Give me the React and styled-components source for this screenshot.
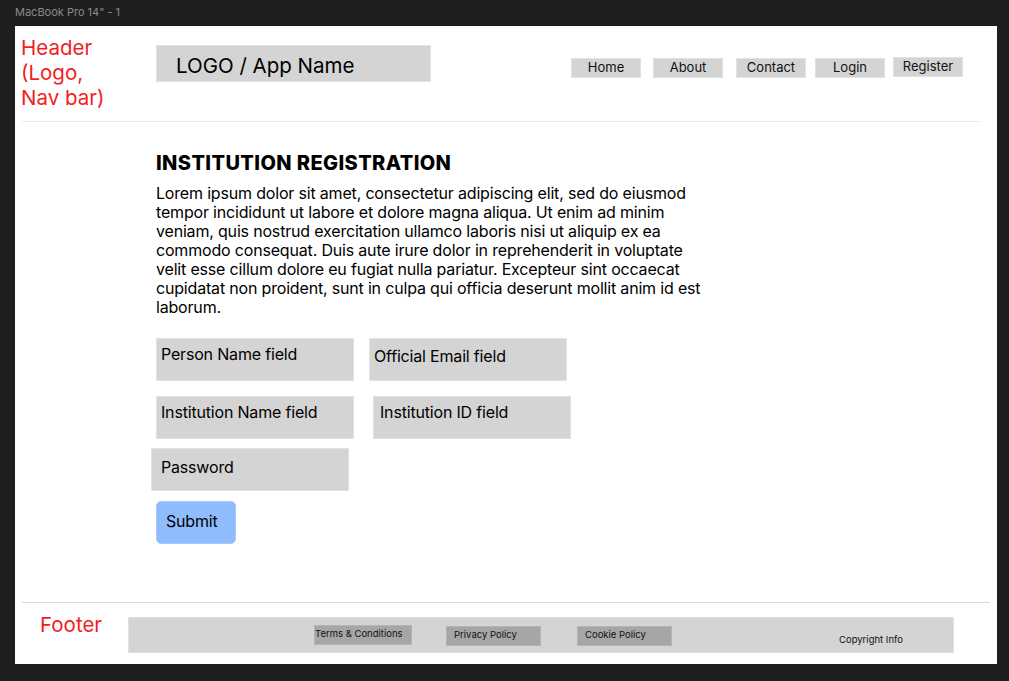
import React from "react";
import styled, { createGlobalStyle } from "styled-components";

const Global = createGlobalStyle`
  html, body { margin: 0; padding: 0; background: #1e1e1e; }
  body { font-family: Inter, "Noto Sans", sans-serif; }
  * { box-sizing: border-box; }
`;

const Canvas = styled.div`
  width: 1009px;
  height: 681px;
  background: #1e1e1e;
  overflow: hidden;
`;

const FrameLabel = styled.div`
  height: 26px;
  padding: 5px 0 0 15px;
  font-size: 11px;
  line-height: 14px;
  color: #8a8a8a;
`;

const Frame = styled.div`
  margin-left: 15px;
  width: 982px;
  height: 638px;
  background: #ffffff;
  display: flex;
  flex-direction: column;
`;

const Header = styled.header`
  height: 95px;
  display: flex;
  align-items: flex-start;
  padding-top: 9px;
`;

const Annotation = styled.div`
  color: #f21d1d;
  font-size: 20.5px;
  line-height: 25px;
  margin-left: ${(p) => p.$left}px;
  width: ${(p) => p.$width}px;
  flex-shrink: 0;
`;

const LogoBox = styled.div`
  margin-top: 10px;
  width: 275px;
  height: 37px;
  background: #d4d4d4;
  border: 1px solid #e2e2e2;
  padding: 2px 0 0 19px;
  font-size: 20.5px;
  line-height: 35px;
  color: #000;
`;

const Nav = styled.nav`
  display: flex;
  margin-left: 140px;
  margin-top: 23px;
`;

const NavButton = styled.div`
  width: 70px;
  height: 20px;
  margin-left: ${(p) => p.$gap}px;
  margin-top: ${(p) => p.$dy}px;
  background: #d4d4d4;
  border: 1px solid #e2e2e2;
  font-size: 13px;
  line-height: 17px;
  text-align: center;
  color: #111;
`;

const Divider = styled.div`
  margin-left: 7px;
  width: ${(p) => p.$width}px;
  height: 1px;
  background: ${(p) => p.$color};
  flex-shrink: 0;
`;

const Main = styled.main`
  flex: 1;
  padding: 29px 0 0 141px;
`;

const Title = styled.h1`
  margin: 0;
  font-size: 20px;
  line-height: 24px;
  font-weight: 800;
  letter-spacing: 0.4px;
  color: #000;
`;

const Paragraph = styled.p`
  margin: 9px 0 0 0;
  width: 552px;
  font-size: 16px;
  line-height: 19px;
  letter-spacing: -0.18px;
  color: #000;
`;

const Form = styled.div`
  margin-top: 21px;
  display: flex;
  flex-direction: column;
`;

const FieldRow = styled.div`
  display: flex;
  margin-top: ${(p) => p.$top}px;
`;

const Field = styled.div`
  width: 198px;
  height: 43px;
  margin-left: ${(p) => p.$shift}px;
  background: #d4d4d4;
  border: 1px solid #e2e2e2;
  padding: ${(p) => p.$padTop}px 0 0 ${(p) => p.$padLeft}px;
  font-size: 16px;
  line-height: 19px;
  letter-spacing: -0.18px;
  color: #000;
`;

const SubmitButton = styled.div`
  margin-top: 10px;
  width: 80px;
  height: 43px;
  border-radius: 5px;
  background: #8fbcfd;
  border: 1px solid #a6c9fb;
  padding: 10px 0 0 9px;
  font-size: 16px;
  line-height: 19px;
  letter-spacing: -0.18px;
  color: #000;
`;

const FooterSection = styled.footer`
  height: 61px;
  display: flex;
  align-items: flex-start;
  padding-top: 9px;
`;

const FooterBar = styled.div`
  margin-top: 5px;
  width: 826px;
  height: 36px;
  background: #d4d4d4;
  border: 1px solid #e0e0e0;
  display: flex;
  align-items: flex-start;
`;

const FooterLink = styled.div`
  width: ${(p) => p.$width}px;
  height: 20px;
  margin-left: ${(p) => p.$gap}px;
  margin-top: ${(p) => p.$top}px;
  background: #a6a6a6;
  border: 1px solid #b4b4b4;
  padding: 2px 0 0 ${(p) => p.$padLeft}px;
  font-size: 9.5px;
  line-height: 12px;
  color: #111;
  white-space: nowrap;
`;

const Copyright = styled.div`
  margin-left: 167px;
  margin-top: 16px;
  font-size: 9.5px;
  line-height: 12px;
  color: #111;
`;

const navItems = [
  { label: "Home", gap: 0, dy: 0 },
  { label: "About", gap: 12, dy: 0 },
  { label: "Contact", gap: 13, dy: 0 },
  { label: "Login", gap: 9, dy: 0 },
  { label: "Register", gap: 8, dy: -1 },
];

const footerLinks = [
  { label: "Terms & Conditions", width: 98, gap: 185, top: 7, padLeft: 0 },
  { label: "Privacy Policy", width: 95, gap: 34, top: 8, padLeft: 7 },
  { label: "Cookie Policy", width: 95, gap: 36, top: 8, padLeft: 7 },
];

export default function App() {
  return (
    <>
      <Global />
      <Canvas>
        <FrameLabel>MacBook Pro 14" - 1</FrameLabel>
        <Frame>
          <Header>
            <Annotation $left={6} $width={135}>
              Header
              <br />
              (Logo,
              <br />
              Nav bar)
            </Annotation>
            <LogoBox>LOGO / App Name</LogoBox>
            <Nav>
              {navItems.map((n) => (
                <NavButton key={n.label} $gap={n.gap} $dy={n.dy}>
                  {n.label}
                </NavButton>
              ))}
            </Nav>
          </Header>
          <Divider $width={958} $color="#ececec" />
          <Main>
            <Title>INSTITUTION REGISTRATION</Title>
            <Paragraph>
              Lorem ipsum dolor sit amet, consectetur adipiscing elit, sed do
              eiusmod tempor incididunt ut labore et dolore magna aliqua. Ut
              enim ad minim veniam, quis nostrud exercitation ullamco laboris
              nisi ut aliquip ex ea commodo consequat. Duis aute irure dolor in
              reprehenderit in voluptate velit esse cillum dolore eu fugiat
              nulla pariatur. Excepteur sint occaecat cupidatat non proident,
              sunt in culpa qui officia deserunt mollit anim id est laborum.
            </Paragraph>
            <Form>
              <FieldRow $top={0}>
                <Field $shift={0} $padTop={6} $padLeft={4}>
                  Person Name field
                </Field>
                <Field $shift={15} $padTop={8} $padLeft={4}>
                  Official Email field
                </Field>
              </FieldRow>
              <FieldRow $top={15}>
                <Field $shift={0} $padTop={6} $padLeft={4}>
                  Institution Name field
                </Field>
                <Field $shift={19} $padTop={6} $padLeft={6}>
                  Institution ID field
                </Field>
              </FieldRow>
              <FieldRow $top={9}>
                <Field $shift={-5} $padTop={9} $padLeft={9}>
                  Password
                </Field>
              </FieldRow>
              <SubmitButton>Submit</SubmitButton>
            </Form>
          </Main>
          <Divider $width={968} $color="#dadada" />
          <FooterSection>
            <Annotation $left={25} $width={88}>
              Footer
            </Annotation>
            <FooterBar>
              {footerLinks.map((l) => (
                <FooterLink
                  key={l.label}
                  $width={l.width}
                  $gap={l.gap}
                  $top={l.top}
                  $padLeft={l.padLeft}
                >
                  {l.label}
                </FooterLink>
              ))}
              <Copyright>Copyright Info</Copyright>
            </FooterBar>
          </FooterSection>
        </Frame>
      </Canvas>
    </>
  );
}
